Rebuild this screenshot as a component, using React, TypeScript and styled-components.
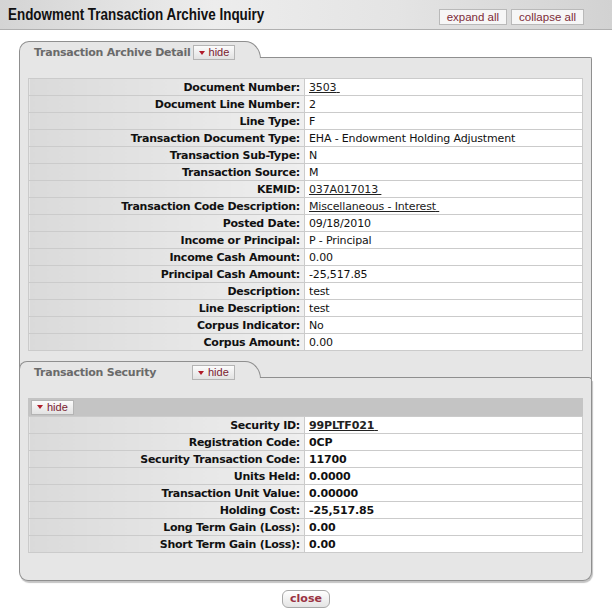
import styled, { createGlobalStyle } from 'styled-components'

const line = '#8f8f8f'
const panelBg = '#e6e6e6'

const GlobalStyle = createGlobalStyle`
  body {
    margin: 0;
    background: #fff;
    font-family: "DejaVu Sans", Verdana, sans-serif;
  }
`

const Header = styled.header`
  display: flex;
  align-items: center;
  justify-content: space-between;
  height: 29px;
  padding: 0 28px 0 8px;
  background: linear-gradient(to right, #d4d4d4, #ededed 35%, #e4e4e4 65%, #d2d2d2);
  border-bottom: 1px solid #b0b0b0;

  h1 {
    margin: 0;
    font-family: "Liberation Sans", Arial, sans-serif;
    font-size: 17px;
    font-weight: 700;
    color: #111;
    transform: scaleX(0.79);
    transform-origin: left center;
    white-space: nowrap;
  }
`

const HeaderButtons = styled.div`
  display: flex;
  gap: 4px;
  margin-top: 5px;
`

const HeaderButton = styled.button`
  height: 16px;
  padding: 0 7px;
  border: 1px solid #b9b9b9;
  background: #f6f6f6;
  color: #7d2b36;
  font-family: "Liberation Sans", Arial, sans-serif;
  font-size: 11.5px;
  line-height: 14px;
`

const Frame = styled.div`
  margin: 11px 20px 0 19px;
`

const TabRow = styled.div<{ $first: boolean }>`
  display: flex;
  height: 18px;
  background: ${({ $first }) => ($first ? '#fff' : panelBg)};
  box-shadow: ${({ $first }) => ($first ? 'none' : `inset 1px 0 0 ${line}`)};
`

const Tab = styled.div<{ $width: number; $first: boolean }>`
  display: flex;
  align-items: center;
  gap: 2px;
  width: ${({ $width }) => $width}px;
  padding: 4px 0 0 14px;
  box-sizing: border-box;
  background: ${panelBg};
  border-top: 1px solid ${line};
  border-left: 1px solid ${line};
  border-right: 1px solid ${line};
  border-top-left-radius: ${({ $first }) => ($first ? 10 : 8)}px;
  border-top-right-radius: 16px 18px;
  color: #6a6a6a;
  font-size: 11px;
  font-weight: 700;
  letter-spacing: -0.25px;
`

const TabTitle = styled.span<{ $width?: number }>`
  display: inline-block;
  min-width: ${({ $width }) => $width ?? 0}px;
`

const TabRest = styled.div<{ $first: boolean }>`
  flex: 1;
  display: flex;
  flex-direction: column;
  border-right: ${({ $first }) => ($first ? 'none' : `1px solid ${line}`)};
`

const TabRestLine = styled.div`
  margin-top: auto;
  height: 1px;
  margin-left: -1px;
  border-top: 1px solid ${line};
  border-right: 1px solid ${line};
  border-top-right-radius: 9px;
  background: ${panelBg};
`

const TabBody = styled.div<{ $last?: boolean }>`
  background: ${panelBg};
  border-left: 1px solid ${line};
  border-right: 1px solid ${line};
  padding: 19px 8px 10px 8px;
  ${({ $last }) =>
    $last &&
    `
    border-bottom: 1px solid ${line};
    border-bottom-left-radius: 9px;
    border-bottom-right-radius: 9px;
    box-shadow: 1px 2px 1px #c4c4c4;
    padding-bottom: 27px;
  `}
`

const HideButton = styled.button`
  display: inline-flex;
  align-items: center;
  gap: 4px;
  height: 15px;
  padding: 0 5px;
  border: 1px solid #b4b4b4;
  background: linear-gradient(#fbfbfb, #e2e2e2);
  color: #7a2030;
  font-family: "Liberation Sans", Arial, sans-serif;
  font-size: 11px;
  line-height: 13px;
  letter-spacing: 0;

  &::before {
    content: '';
    border-left: 3.5px solid transparent;
    border-right: 3.5px solid transparent;
    border-top: 4px solid #b01c2a;
  }
`

const SubBar = styled.div`
  display: flex;
  align-items: center;
  height: 18px;
  padding-left: 3px;
  background: #c4c4c4;
`

const Grid = styled.table`
  width: 100%;
  border-collapse: collapse;
  font-size: 11px;
  color: #111;

  th,
  td {
    height: 16px;
    padding: 0 4px;
    border: 1px solid #cbcbcb;
    white-space: nowrap;
  }

  th {
    width: 267px;
    text-align: right;
    font-weight: 700;
    letter-spacing: -0.25px;
    background: linear-gradient(to right, #dadada, #efefef);
  }

  td {
    letter-spacing: -0.15px;
    background: #fff;
  }
`

const Value = styled.td<{ $bold?: boolean }>`
  font-weight: ${({ $bold }) => ($bold ? 700 : 400)};
`

const Link = styled.span`
  text-decoration: underline;
  color: #222;
`

const Footer = styled.div`
  display: flex;
  justify-content: center;
  padding-top: 9px;
`

const CloseButton = styled.button`
  height: 18px;
  padding: 0 7px;
  border: 1px solid #a8a8a8;
  border-radius: 6px;
  background: linear-gradient(#ffffff, #e4e4e4);
  color: #9a3343;
  font-family: "DejaVu Sans", Verdana, sans-serif;
  font-size: 11px;
  font-weight: 700;
  line-height: 14px;
`

type Row = { label: string; value: string; link?: boolean }

const detailRows: Row[] = [
  { label: 'Document Number:', value: '3503', link: true },
  { label: 'Document Line Number:', value: '2' },
  { label: 'Line Type:', value: 'F' },
  { label: 'Transaction Document Type:', value: 'EHA - Endowment Holding Adjustment' },
  { label: 'Transaction Sub-Type:', value: 'N' },
  { label: 'Transaction Source:', value: 'M' },
  { label: 'KEMID:', value: '037A017013', link: true },
  { label: 'Transaction Code Description:', value: 'Miscellaneous - Interest', link: true },
  { label: 'Posted Date:', value: '09/18/2010' },
  { label: 'Income or Principal:', value: 'P - Principal' },
  { label: 'Income Cash Amount:', value: '0.00' },
  { label: 'Principal Cash Amount:', value: '-25,517.85' },
  { label: 'Description:', value: 'test' },
  { label: 'Line Description:', value: 'test' },
  { label: 'Corpus Indicator:', value: 'No' },
  { label: 'Corpus Amount:', value: '0.00' },
]

const securityRows: Row[] = [
  { label: 'Security ID:', value: '99PLTF021', link: true },
  { label: 'Registration Code:', value: '0CP' },
  { label: 'Security Transaction Code:', value: '11700' },
  { label: 'Units Held:', value: '0.0000' },
  { label: 'Transaction Unit Value:', value: '0.00000' },
  { label: 'Holding Cost:', value: '-25,517.85' },
  { label: 'Long Term Gain (Loss):', value: '0.00' },
  { label: 'Short Term Gain (Loss):', value: '0.00' },
]

const Rows = ({ rows, bold }: { rows: Row[]; bold?: boolean }) => (
  <Grid>
    <tbody>
      {rows.map((r) => (
        <tr key={r.label}>
          <th>{r.label}</th>
          <Value $bold={bold}>
            {r.link ? <Link>{r.value}&nbsp;</Link> : r.value}
          </Value>
        </tr>
      ))}
    </tbody>
  </Grid>
)

const App = () => {
  return (
    <>
      <GlobalStyle />
      <Header>
        <h1>Endowment Transaction Archive Inquiry</h1>
        <HeaderButtons>
          <HeaderButton>expand all</HeaderButton>
          <HeaderButton>collapse all</HeaderButton>
        </HeaderButtons>
      </Header>
      <Frame>
        <TabRow $first>
          <Tab $width={242} $first>
            <TabTitle>Transaction Archive Detail</TabTitle>
            <HideButton>hide</HideButton>
          </Tab>
          <TabRest $first>
            <TabRestLine />
          </TabRest>
        </TabRow>
        <TabBody>
          <Rows rows={detailRows} />
        </TabBody>
        <TabRow $first={false}>
          <Tab $width={242} $first={false}>
            <TabTitle $width={156}>Transaction Security</TabTitle>
            <HideButton>hide</HideButton>
          </Tab>
          <TabRest $first={false}>
            <TabRestLine />
          </TabRest>
        </TabRow>
        <TabBody $last>
          <SubBar>
            <HideButton>hide</HideButton>
          </SubBar>
          <Rows rows={securityRows} bold />
        </TabBody>
      </Frame>
      <Footer>
        <CloseButton>close</CloseButton>
      </Footer>
    </>
  )
}

export default App
